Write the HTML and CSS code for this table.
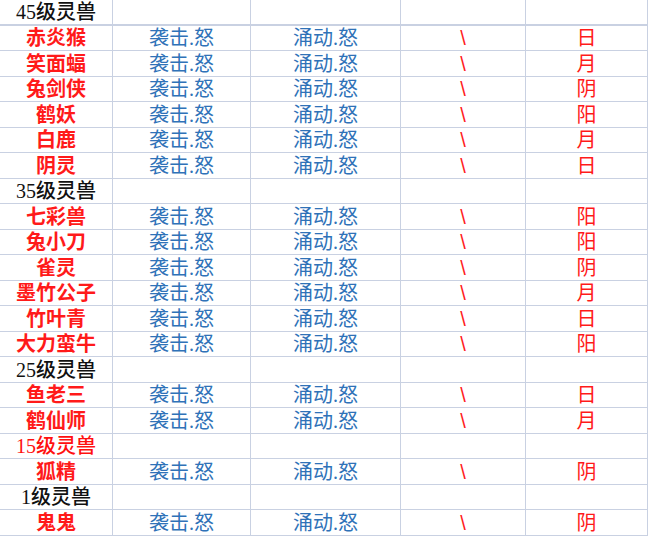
FILE: index.html
```html
<!DOCTYPE html>
<html lang="zh-CN">
<head>
<meta charset="utf-8">
<title>灵兽</title>
<link rel="stylesheet" href="styles.css">
</head>
<body>
<div class="sheet">
  <div class="row first"><div class="c head">45级灵兽</div><div class="c"></div><div class="c"></div><div class="c"></div><div class="c"></div></div>
  <div class="row"><div class="c name">赤炎猴</div><div class="c skill">袭击.怒</div><div class="c skill">涌动.怒</div><div class="c mark">\</div><div class="c attr">日</div></div>
  <div class="row"><div class="c name">笑面蝠</div><div class="c skill">袭击.怒</div><div class="c skill">涌动.怒</div><div class="c mark">\</div><div class="c attr">月</div></div>
  <div class="row"><div class="c name">兔剑侠</div><div class="c skill">袭击.怒</div><div class="c skill">涌动.怒</div><div class="c mark">\</div><div class="c attr">阴</div></div>
  <div class="row"><div class="c name">鹤妖</div><div class="c skill">袭击.怒</div><div class="c skill">涌动.怒</div><div class="c mark">\</div><div class="c attr">阳</div></div>
  <div class="row"><div class="c name">白鹿</div><div class="c skill">袭击.怒</div><div class="c skill">涌动.怒</div><div class="c mark">\</div><div class="c attr">月</div></div>
  <div class="row"><div class="c name">阴灵</div><div class="c skill">袭击.怒</div><div class="c skill">涌动.怒</div><div class="c mark">\</div><div class="c attr">日</div></div>
  <div class="row"><div class="c head">35级灵兽</div><div class="c"></div><div class="c"></div><div class="c"></div><div class="c"></div></div>
  <div class="row"><div class="c name">七彩兽</div><div class="c skill">袭击.怒</div><div class="c skill">涌动.怒</div><div class="c mark">\</div><div class="c attr">阳</div></div>
  <div class="row"><div class="c name">兔小刀</div><div class="c skill">袭击.怒</div><div class="c skill">涌动.怒</div><div class="c mark">\</div><div class="c attr">阳</div></div>
  <div class="row"><div class="c name">雀灵</div><div class="c skill">袭击.怒</div><div class="c skill">涌动.怒</div><div class="c mark">\</div><div class="c attr">阴</div></div>
  <div class="row"><div class="c name">墨竹公子</div><div class="c skill">袭击.怒</div><div class="c skill">涌动.怒</div><div class="c mark">\</div><div class="c attr">月</div></div>
  <div class="row"><div class="c name">竹叶青</div><div class="c skill">袭击.怒</div><div class="c skill">涌动.怒</div><div class="c mark">\</div><div class="c attr">日</div></div>
  <div class="row"><div class="c name">大力蛮牛</div><div class="c skill">袭击.怒</div><div class="c skill">涌动.怒</div><div class="c mark">\</div><div class="c attr">阳</div></div>
  <div class="row"><div class="c head">25级灵兽</div><div class="c"></div><div class="c"></div><div class="c"></div><div class="c"></div></div>
  <div class="row"><div class="c name">鱼老三</div><div class="c skill">袭击.怒</div><div class="c skill">涌动.怒</div><div class="c mark">\</div><div class="c attr">日</div></div>
  <div class="row"><div class="c name">鹤仙师</div><div class="c skill">袭击.怒</div><div class="c skill">涌动.怒</div><div class="c mark">\</div><div class="c attr">月</div></div>
  <div class="row"><div class="c head red">15级灵兽</div><div class="c"></div><div class="c"></div><div class="c"></div><div class="c"></div></div>
  <div class="row"><div class="c name">狐精</div><div class="c skill">袭击.怒</div><div class="c skill">涌动.怒</div><div class="c mark">\</div><div class="c attr">阴</div></div>
  <div class="row"><div class="c head">1级灵兽</div><div class="c"></div><div class="c"></div><div class="c"></div><div class="c"></div></div>
  <div class="row"><div class="c name">鬼鬼</div><div class="c skill">袭击.怒</div><div class="c skill">涌动.怒</div><div class="c mark">\</div><div class="c attr">阴</div></div>
</div>
</body>
</html>
```

FILE: styles.css
```css
html, body {
  margin: 0;
  padding: 0;
  background: #ffffff;
}

body {
  font-family: "Liberation Serif", "Noto Sans CJK SC", serif;
  font-size: 20px;
  color: #000000;
}

.sheet {
  width: 648px;
}

.row {
  display: grid;
  grid-template-columns: 113px 138px 150px 125px 122px;
  height: 25px;
}

.row:nth-child(odd) {
  height: 26px;
}

.row.first {
  height: 26px;
}

.row.first .c {
  border-bottom-width: 2px;
}

.c {
  box-sizing: border-box;
  border-right: 1px solid #c9d1e2;
  border-bottom: 1px solid #c9d1e2;
  display: flex;
  align-items: flex-end;
  justify-content: center;
  line-height: 22px;
  padding-bottom: 1px;
  white-space: nowrap;
  overflow: hidden;
}

.head {
  color: #111111;
  font-weight: 500;
}

.head.red {
  color: #ff1010;
}

.name {
  color: #ff1a1a;
  font-weight: 700;
}

.skill {
  color: #2f72b8;
}

.mark {
  color: #ff2020;
  font-family: "Liberation Sans", sans-serif;
}

.attr {
  color: #ff1a1a;
}
```
